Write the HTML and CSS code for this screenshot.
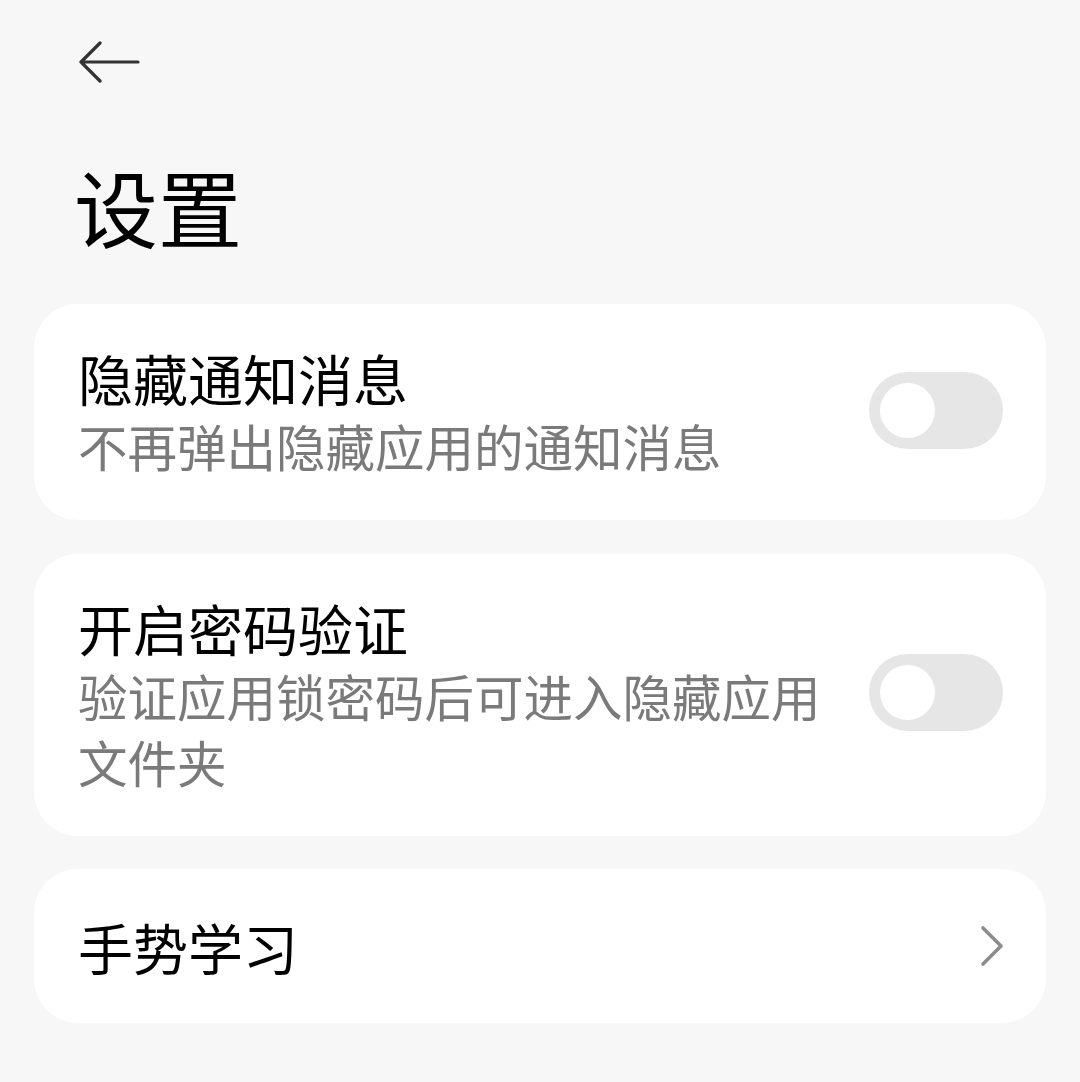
FILE: index.html
```html
<!DOCTYPE html>
<html>

<head>
  <meta charset="UTF-8">
  <title>设置</title>
  <link rel="stylesheet" href="styles.css">
</head>

<body>
  <div class="page">
    <div class="back">
      <svg width="62" height="44" viewBox="0 0 62 44">
        <path d="M2 22 H59 M21 3 L2 22 L21 41" fill="none" stroke="#333" stroke-width="3.2" stroke-linecap="round" stroke-linejoin="round"/>
      </svg>
    </div>
    <h1 class="title">设置</h1>

    <div class="card">
      <div class="text">
        <div class="label">隐藏通知消息</div>
        <div class="desc">不再弹出隐藏应用的通知消息</div>
      </div>
      <div class="switch"><div class="knob"></div></div>
    </div>

    <div class="card">
      <div class="text">
        <div class="label">开启密码验证</div>
        <div class="desc">验证应用锁密码后可进入隐藏应用文件夹</div>
      </div>
      <div class="switch"><div class="knob"></div></div>
    </div>

    <div class="card single">
      <div class="text">
        <div class="label">手势学习</div>
      </div>
      <svg class="chevron" width="26" height="42" viewBox="0 0 26 42">
        <path d="M4 3 L22 21 L4 39" fill="none" stroke="#8c8c8c" stroke-width="3.6" stroke-linecap="round" stroke-linejoin="round"/>
      </svg>
    </div>
  </div>
</body>

</html>
```

FILE: styles.css
```css
body {
  margin: 0;
  background: #f7f7f7;
  font-family: "Noto Sans CJK SC", "Noto Sans", sans-serif;
}

.page {
  padding: 0 34px;
}

.back {
  padding-top: 40px;
  padding-left: 45px;
  height: 44px;
}

.back svg {
  display: block;
}

.title {
  margin: 71px 0 48px 40px;
  font-size: 84px;
  font-weight: 400;
  line-height: 101px;
  color: #000;
}

.card {
  display: flex;
  align-items: center;
  gap: 40px;
  background: #fff;
  border-radius: 44px;
  padding: 37px 43px 41px 44px;
  margin-bottom: 33.5px;
}

.card.single {
  padding-top: 41px;
  padding-bottom: 41px;
}

.text {
  flex: 1;
}

.label {
  font-size: 55px;
  line-height: 72px;
  font-weight: 400;
  color: #000;
}

.desc {
  font-size: 49.5px;
  line-height: 66px;
  color: #7a7a7a;
}

.switch {
  width: 134px;
  height: 77px;
  border-radius: 39px;
  background: #e6e6e6;
  flex-shrink: 0;
  display: flex;
  align-items: center;
  padding-left: 11px;
  box-sizing: border-box;
}

.knob {
  width: 55px;
  height: 55px;
  border-radius: 50%;
  background: #fff;
}

.chevron {
  display: block;
  flex-shrink: 0;
  margin-right: -2px;
}
```
